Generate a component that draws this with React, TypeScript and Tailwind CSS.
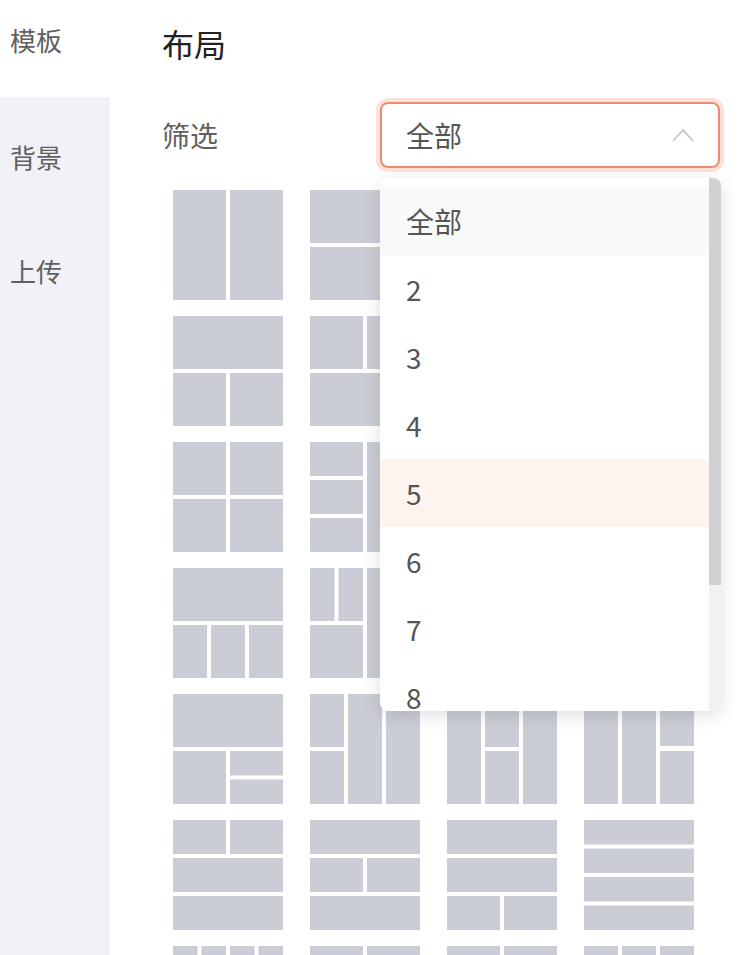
import React from 'react';

type Rect = [number, number, number, number];

// thumbnails are drawn on a 110 x 110 box, pieces separated by 4px
const H = 53;
const H2 = 57;
const T = 34;
const Q = 24.5;

const layouts: Rect[][] = [
  // row 1
  [[0, 0, H, 110], [H2, 0, H, 110]],
  [[0, 0, 110, H], [0, H2, 110, H]],
  [[0, 0, T, 110], [38, 0, T, 110], [76, 0, T, 110]],
  [[0, 0, 110, T], [0, 38, 110, T], [0, 76, 110, T]],
  // row 2
  [[0, 0, 110, H], [0, H2, H, H], [H2, H2, H, H]],
  [[0, 0, H, H], [H2, 0, H, H], [0, H2, 110, H]],
  [[0, 0, H, 110], [H2, 0, H, H], [H2, H2, H, H]],
  [[0, 0, H, H], [0, H2, H, H], [H2, 0, H, 110]],
  // row 3
  [[0, 0, H, H], [H2, 0, H, H], [0, H2, H, H], [H2, H2, H, H]],
  [[0, 0, H, T], [0, 38, H, T], [0, 76, H, T], [H2, 0, H, 110]],
  [[0, 0, H, 110], [H2, 0, H, T], [H2, 38, H, T], [H2, 76, H, T]],
  [[0, 0, T, H], [38, 0, T, H], [76, 0, T, H], [0, H2, 110, H]],
  // row 4
  [[0, 0, 110, H], [0, H2, T, H], [38, H2, T, H], [76, H2, T, H]],
  [[0, 0, Q, H], [28.5, 0, Q, H], [0, H2, H, H], [H2, 0, H, 110]],
  [[0, 0, H, 110], [H2, 0, Q, H], [85.5, 0, Q, H], [H2, H2, H, H]],
  [[0, 0, H, H], [H2, 0, H, H], [0, H2, H, Q], [0, 85.5, H, Q], [H2, H2, H, H]],
  // row 5
  [[0, 0, 110, H], [0, H2, H, H], [H2, H2, H, Q], [H2, 85.5, H, Q]],
  [[0, 0, T, H], [0, H2, T, H], [38, 0, T, 110], [76, 0, T, 110]],
  [[0, 0, T, 110], [38, 0, T, H], [38, H2, T, H], [76, 0, T, 110]],
  [[0, 0, T, 110], [38, 0, T, 110], [76, 0, T, 52], [76, 57, T, 53]],
  // row 6
  [[0, 0, H, T], [H2, 0, H, T], [0, 38, 110, T], [0, 76, 110, T]],
  [[0, 0, 110, T], [0, 38, H, T], [H2, 38, H, T], [0, 76, 110, T]],
  [[0, 0, 110, T], [0, 38, 110, T], [0, 76, H, T], [H2, 76, H, T]],
  [[0, 0, 110, Q], [0, 28.5, 110, Q], [0, 57, 110, Q], [0, 85.5, 110, Q]],
  // row 7
  [[0, 0, Q, 110], [28.5, 0, Q, 110], [57, 0, Q, 110], [85.5, 0, Q, 110]],
  [[0, 0, H, 110], [H2, 0, H, 110]],
  [[0, 0, H, 110], [H2, 0, H, 110]],
  [[0, 0, T, 110], [38, 0, T, 110], [76, 0, T, 110]],
];

const options = ['全部', '2', '3', '4', '5', '6', '7', '8', '9', '10'];

function Thumb({ rects }: { rects: Rect[] }) {
  return (
    <svg width="110" height="110" viewBox="0 0 110 110" className="block">
      {rects.map(([x, y, w, h], i) => (
        <rect key={i} x={x} y={y} width={w} height={h} fill="#cbcdd6" />
      ))}
    </svg>
  );
}

export default function App() {
  return (
    <div className="flex h-screen overflow-hidden bg-white font-['Noto_Sans_CJK_SC','Noto_Sans',sans-serif]">
      {/* side tabs */}
      <div className="w-[110px] shrink-0 bg-[#f1f2f8] text-[26px] leading-[36px] text-[#606060]">
        <div className="h-[97px] bg-white pl-[10px] pt-[22px]">模板</div>
        <div className="h-[114px] pl-[10px] pt-[42px]">背景</div>
        <div className="h-[114px] pl-[10px] pt-[42px]">上传</div>
      </div>

      {/* main panel */}
      <div className="flex-1 pl-[52px]">
        <div className="flex h-[86px] items-center text-[32px] text-[#222]">布局</div>

        <div className="mt-[16px] flex items-center">
          <div className="w-[218px] text-[28px] text-[#606060]">筛选</div>
          <div className="relative">
            <div className="flex h-[66px] w-[340px] items-center justify-between rounded-[8px] border-2 border-[#ec8b6e] pl-[24px] pr-[24px] text-[28px] text-[#555] ring-4 ring-[#fbe1d9]">
              <span>全部</span>
              <svg width="22" height="14" viewBox="0 0 22 14">
                <polyline points="1,13 11,2 21,13" fill="none" stroke="#c4c4c4" strokeWidth="1.8" />
              </svg>
            </div>

            {/* open options list */}
            <div className="absolute left-0 top-[76px] z-10 flex h-[533px] w-[341px] overflow-hidden rounded-[8px] bg-white shadow-[0_4px_18px_rgba(0,0,0,0.13)]">
              <div className="flex-1 overflow-hidden py-[9px]">
                {options.map((o, i) => (
                  <div
                    key={o}
                    className={
                      'flex h-[68px] items-center pl-[26px] text-[28px] text-[#555] ' +
                      (i === 0 ? 'bg-[#f9f9f9]' : i === 4 ? 'bg-[#fdf4ef]' : '')
                    }
                  >
                    {o}
                  </div>
                ))}
              </div>
              {/* scrollbar */}
              <div className="w-[12px] shrink-0 bg-[#f1f1f1]">
                <div className="h-[407px] bg-[#d1d1d1]" />
              </div>
            </div>
          </div>
        </div>

        <div className="mt-[22px] grid w-[532px] grid-cols-4 gap-x-[27px] gap-y-[16px] pl-[11px]">
          {layouts.map((l, i) => (
            <Thumb key={i} rects={l} />
          ))}
        </div>
      </div>
    </div>
  );
}
